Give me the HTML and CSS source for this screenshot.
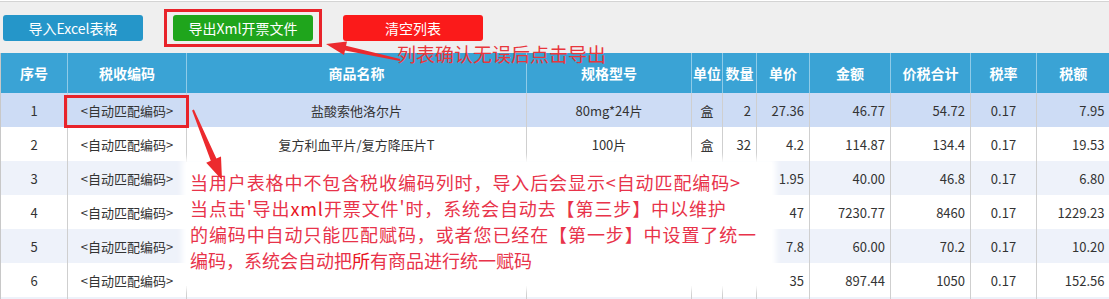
FILE: index.html
```html
<!DOCTYPE html>
<html lang="zh-CN">
<head>
<meta charset="utf-8">
<title>导出Xml开票文件</title>
<link rel="stylesheet" href="styles.css">
</head>
<body>
<div class="page">
  <div class="toolbar">
    <button class="btn btn-blue">导入Excel表格</button>
    <button class="btn btn-green">导出Xml开票文件</button>
    <button class="btn btn-red">清空列表</button>
  </div>
  <table class="grid">
    <colgroup>
      <col class="c1"><col class="c2"><col class="c3"><col class="c4"><col class="c5"><col class="c6"><col class="c7"><col class="c8"><col class="c9"><col class="c10"><col class="c11">
    </colgroup>
    <thead>
      <tr><th>序号</th><th>税收编码</th><th>商品名称</th><th>规格型号</th><th>单位</th><th>数量</th><th>单价</th><th>金额</th><th>价税合计</th><th>税率</th><th>税额</th></tr>
    </thead>
    <tbody>
      <tr class="sel"><td class="ctr">1</td><td class="ctr">&lt;自动匹配编码&gt;</td><td class="ctr">盐酸索他洛尔片</td><td class="ctr">80mg*24片</td><td class="ctr">盒</td><td class="num">2</td><td class="num">27.36</td><td class="num">46.77</td><td class="num">54.72</td><td class="ctr">0.17</td><td class="num">7.95</td></tr>
      <tr><td class="ctr">2</td><td class="ctr">&lt;自动匹配编码&gt;</td><td class="ctr">复方利血平片/复方降压片T</td><td class="ctr">100片</td><td class="ctr">盒</td><td class="num">32</td><td class="num">4.2</td><td class="num">114.87</td><td class="num">134.4</td><td class="ctr">0.17</td><td class="num">19.53</td></tr>
      <tr class="alt"><td class="ctr">3</td><td class="ctr">&lt;自动匹配编码&gt;</td><td></td><td></td><td></td><td></td><td class="num">1.95</td><td class="num">40.00</td><td class="num">46.8</td><td class="ctr">0.17</td><td class="num">6.80</td></tr>
      <tr><td class="ctr">4</td><td class="ctr">&lt;自动匹配编码&gt;</td><td></td><td></td><td></td><td></td><td class="num">47</td><td class="num">7230.77</td><td class="num">8460</td><td class="ctr">0.17</td><td class="num">1229.23</td></tr>
      <tr class="alt"><td class="ctr">5</td><td class="ctr">&lt;自动匹配编码&gt;</td><td></td><td></td><td></td><td></td><td class="num">7.8</td><td class="num">60.00</td><td class="num">70.2</td><td class="ctr">0.17</td><td class="num">10.20</td></tr>
      <tr><td class="ctr">6</td><td class="ctr">&lt;自动匹配编码&gt;</td><td></td><td></td><td></td><td></td><td class="num">35</td><td class="num">897.44</td><td class="num">1050</td><td class="ctr">0.17</td><td class="num">152.56</td></tr>
      <tr class="alt"><td></td><td></td><td></td><td></td><td></td><td></td><td></td><td></td><td></td><td></td><td></td></tr>
    </tbody>
  </table>

  <div class="mark mark-export"></div>
  <div class="mark mark-code"></div>
  <div class="note-top">列表确认无误后点击导出</div>
  <div class="note-box">
    <p class="wide">当用户表格中不包含税收编码列时，导入后会显示&lt;自动匹配编码&gt;</p>
    <p class="wide">当点击'导出<b>xml</b>开票文件'时，系统会自动去【第三步】中以维护</p>
    <p class="wide">的编码中自动只能匹配赋码，或者您已经在【第一步】中设置了统一</p>
    <p>编码，系统会自动把<b>所</b>有商品进行统一赋码</p>
  </div>
  <svg class="arrows" width="1109" height="299" viewBox="0 0 1109 299">
    <polygon points="400.2,59 399.8,61 345,50.6 344,55 326,44 347,41.4 346,45.8" fill="#ec2a2e"/>
    <polygon points="193.9,109.6 192.1,110.4 210.8,160.8 206.2,162.8 222,180 221,156.6 216.4,158.6" fill="#ec2a2e"/>
  </svg>
</div>
</body>
</html>
```
FILE: styles.css
```css
* { box-sizing: border-box; }
html, body { margin: 0; padding: 0; background: #ffffff; }
body { font-family: "Noto Sans CJK SC", "Noto Sans", sans-serif; color: #333; }

.page { position: relative; width: 1109px; height: 299px; overflow: hidden; }

.toolbar {
  height: 52px;
  background: #efefef;
  border-top: 1px solid #d4d4d4;
  margin-top: 1px;
  display: flex;
  align-items: flex-start;
  padding: 13px 0 0 3px;
  gap: 30px;
}
.btn {
  width: 140px;
  height: 26px;
  border: 0;
  border-radius: 3px;
  color: #fff;
  font-family: "Noto Sans CJK SC", sans-serif;
  font-size: 14px;
  line-height: 26px;
  padding: 0;
}
.btn-blue { background: #2596c9; }
.btn-green { background: #1fa51c; }
.btn-red { background: #fb1a1a; }

.grid {
  border-collapse: collapse;
  table-layout: fixed;
  width: 1109px;
  font-size: 13px;
}
.c1 { width: 67px; } .c2 { width: 119px; } .c3 { width: 340px; } .c4 { width: 165px; }
.c5 { width: 31px; } .c6 { width: 34px; } .c7 { width: 53px; } .c8 { width: 81px; }
.c9 { width: 80px; } .c10 { width: 66px; } .c11 { width: 73px; }

.grid th {
  height: 40px;
  background: #3aa3d5;
  color: #fff;
  font-size: 14px;
  font-weight: bold;
  border-left: 1px solid #8fcbe8;
  padding: 0;
  white-space: nowrap;
}
.grid th:first-child, .grid td:first-child { border-left: 1px solid #c8c8c8; }
.grid td {
  height: 34px;
  padding: 0 5px;
  border-left: 1px solid #cfcfcf;
  white-space: nowrap;
  overflow: hidden;
}
.grid td.ctr { text-align: center; padding: 0; }
.grid td.num { text-align: right; }
.grid tr.sel td { background: #cddcf5; }
.grid tr.alt td { background: #eef2fa; }

.mark { position: absolute; border: 3px solid #e8232a; }
.mark-export { left: 164px; top: 9px; width: 158px; height: 38px; }
.mark-code { left: 64px; top: 95px; width: 125px; height: 33px; }

.note-top {
  position: absolute;
  left: 397px; top: 43px;
  font-size: 19px;
  line-height: 22px;
  color: #e8363c;
  white-space: nowrap;
}
.note-box {
  position: absolute;
  left: 186px; top: 162px;
  width: 586px; height: 124px;
  background: #ffffff;
  box-shadow: 0 0 6px 4px #ffffff;
  padding: 7px 0 0 4px;
  color: #e8334a;
  font-size: 18px;
  line-height: 26px;
}
.note-box p { margin: 0; white-space: nowrap; }
.note-box p.wide { letter-spacing: 0.9px; }
.note-box b { color: #e8141e; font-weight: normal; }

.arrows { position: absolute; left: 0; top: 0; pointer-events: none; }
```
